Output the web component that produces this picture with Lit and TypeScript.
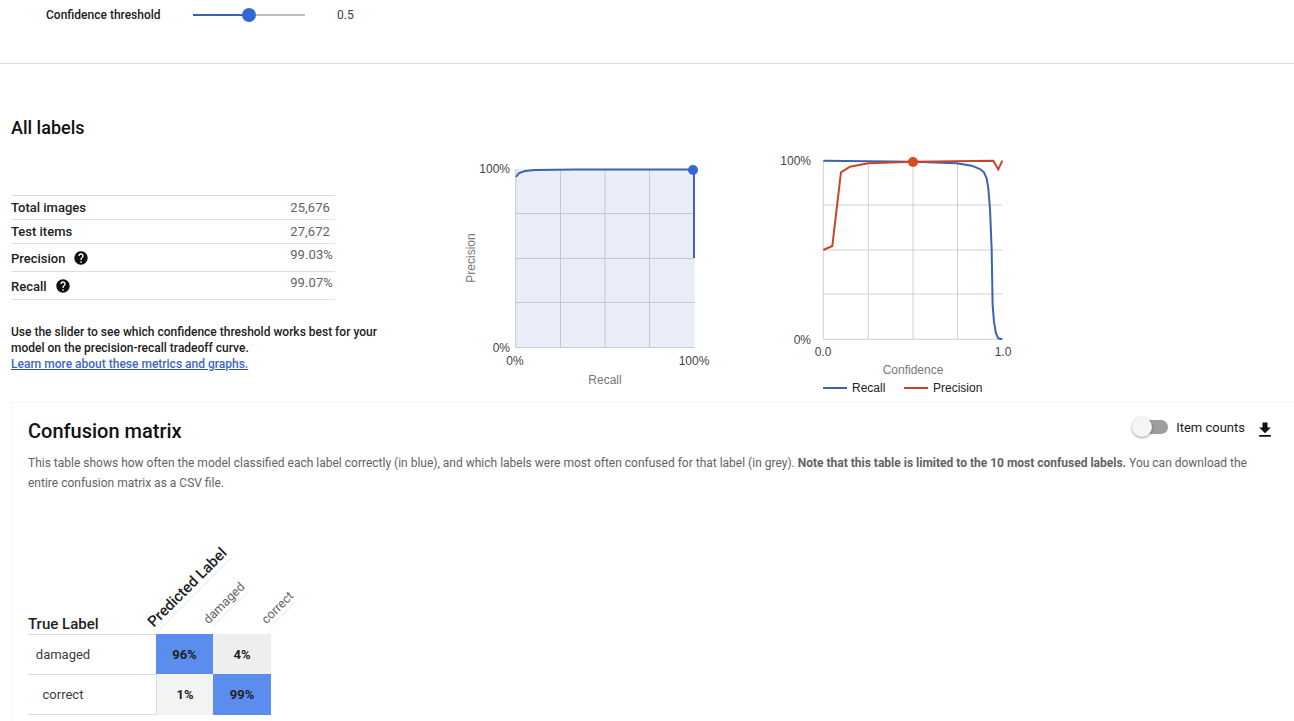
import { LitElement, html, css, svg } from "lit";
import { customElement } from "lit/decorators.js";

const helpPath = "M12 2C6.48 2 2 6.48 2 12s4.48 10 10 10 10-4.48 10-10S17.52 2 12 2zm1 17h-2v-2h2v2zm2.07-7.75l-.9.92C13.45 12.9 13 13.5 13 15h-2v-.5c0-1.1.45-2.1 1.17-2.83l1.24-1.26c.37-.36.59-.86.59-1.41 0-1.1-.9-2-2-2s-2 .9-2 2H8c0-2.21 1.79-4 4-4s4 1.79 4 4c0 .88-.36 1.68-.93 2.25z";

const help = html`<svg class="help" viewBox="0 0 24 24"><path d=${helpPath}></path></svg>`;

const stats = [
  { k: "Total images", v: "25,676", h: false },
  { k: "Test items", v: "27,672", h: false },
  { k: "Precision", v: "99.03%", h: true },
  { k: "Recall", v: "99.07%", h: true },
];

const toPts = (pts: number[][]) => pts.map(([x, y]) => `${x / 3},${y / 3}`).join(" ");

const recall = toPts([[0, 47], [270, 50], [400, 55], [445, 62], [470, 72], [482, 82], [490, 100], [495, 130], [500, 190], [505, 310], [508, 480], [512, 530], [518, 565], [525, 580], [537, 583]]);
const precision = toPts([[0, 315], [27, 303], [53, 82], [80, 65], [135, 55], [270, 50], [510, 47], [525, 73], [537, 47]]);

@customElement("app-root")
export class AppRoot extends LitElement {
  static styles = css`
    :host {
      display: block;
      height: 721px;
      overflow: hidden;
      background: #fff;
      color: #202124;
      font-family: Roboto, "Liberation Sans", sans-serif;
    }
    .top {
      height: 64px;
      box-sizing: border-box;
      border-bottom: 1px solid #dadce0;
      padding-left: 46px;
    }
    .slider-row {
      height: 30px;
      display: flex;
      align-items: center;
      font-size: 12px;
    }
    .slider-label { width: 114px; flex: none; font-weight: 500; white-space: nowrap; }
    .slider {
      margin-left: 33px;
      width: 112px;
      height: 2px;
      background: #bdbdbd;
      position: relative;
    }
    .slider-fill { width: 56px; height: 2px; background: #3a5fb0; }
    .thumb {
      position: absolute;
      left: 49px;
      top: -6px;
      width: 14px;
      height: 14px;
      border-radius: 50%;
      background: #3367d6;
    }
    .slider-value { margin-left: 32px; color: #3c4043; }

    .all {
      padding: 52px 0 0 11px;
      height: 338px;
      box-sizing: border-box;
      display: flex;
    }
    .left { width: 380px; flex: none; }
    h2 {
      margin: 0;
      font-size: 18px;
      line-height: 24px;
      font-weight: 500;
      color: #111;
    }
    .stats {
      margin-top: 55px;
      width: 324px;
      border-top: 1px solid #dadce0;
    }
    .stat {
      display: flex;
      justify-content: space-between;
      border-bottom: 1px solid #e0e0e0;
      height: 23px;
      align-items: center;
      font-size: 13px;
      padding-right: 5px;
    }
    .stat.tall { height: 27px; padding-right: 2px; align-items: flex-start; }
    .stat.tall .k { padding-top: 6px; }
    .stat.tall .v { padding-top: 3px; }
    .k { display: flex; align-items: center; font-weight: 500; }
    .v { color: #5f6368; letter-spacing: 0.1px; }
    .help { width: 16px; height: 16px; margin-left: 8px; fill: #111; }
    .note {
      margin-top: 24px;
      font-size: 12px;
      line-height: 16px;
      font-weight: 500;
      color: #202124;
    }
    .note a {
      color: #3c68c4;
      text-decoration: underline;
      text-decoration-color: #2f4f8f;
      display: block;
    }
    .charts { display: flex; flex: none; }
    .chart { display: block; flex: none; }
    .chart.one { margin: 34px 0 0 64px; }
    .chart.two { margin: 29px 0 0 55px; }
    .chart text { font-family: "Liberation Sans", Arial, sans-serif; font-size: 12px; fill: #444; }
    .chart text.title { fill: #777; }
    .chart text.legend { fill: #222; }
    .grid { stroke: #c6c9d0; stroke-width: 1; fill: none; }
    .grid2 { stroke: #d0d0d0; stroke-width: 1; fill: none; }
    .area { fill: #e9edf9; }

    .card {
      margin-left: 11px;
      border: 1px solid #f5f5f5;
      border-right: none;
      padding: 16px 16px 0 16px;
      height: 340px;
      box-sizing: border-box;
    }
    .card-head { display: flex; align-items: flex-start; height: 24px; }
    h3 {
      margin: 0;
      font-size: 20px;
      line-height: 24px;
      font-weight: 500;
      color: #111;
      flex: 1;
    }
    .tools { display: flex; align-items: center; height: 16px; }
    .toggle {
      position: relative;
      width: 34px;
      height: 14px;
      border-radius: 7px;
      background: #9e9e9e;
    }
    .knob {
      position: absolute;
      left: -2px;
      top: -3px;
      width: 20px;
      height: 20px;
      border-radius: 50%;
      background: #f5f5f5;
      box-shadow: 0 1px 3px rgba(0, 0, 0, 0.4);
    }
    .counts { margin-left: 8px; font-size: 13px; color: #202124; }
    .dl { width: 20px; height: 20px; margin: 6px 3px 0 10px; fill: #111; }
    .desc {
      margin: 10px 0 0;
      font-size: 12px;
      line-height: 20px;
      color: #5f6368;
      max-width: 1240px;
    }
    .desc b { font-weight: 700; }

    .matrix {
      margin-top: 37px;
      display: grid;
      grid-template-columns: 128px 57px 58px;
      grid-template-rows: 104px 40px 41px;
      width: 243px;
    }
    .corner {
      align-self: end;
      padding-right: 58px;
      font-size: 15px;
      font-weight: 500;
      text-align: center;
      color: #202124;
      line-height: 20px;
      white-space: nowrap;
    }
    .colh { position: relative; }
    .rot {
      position: absolute;
      transform-origin: 0 100%;
      transform: rotate(-45deg);
      white-space: nowrap;
      border-bottom: 1px solid #eeeeee;
    }
    .rot.main { left: 2px; bottom: 2px; font-size: 15px; font-weight: 500; color: #202124; line-height: 20px; }
    .rot.sub { font-size: 12.5px; color: #5f6368; line-height: 16px; }
    .rot.a { left: 56px; bottom: 6px; }
    .rot.b { left: 57px; bottom: 6px; }
    .rowh {
      border-top: 1px solid #dadce0;
      padding-right: 58px;
      font-size: 13px;
      color: #3c4043;
      display: flex;
      align-items: center;
      justify-content: center;
    }
    .rowh.last { border-bottom: 1px solid #dadce0; }
    .cell {
      display: flex;
      align-items: center;
      justify-content: center;
      font-size: 13px;
      font-weight: 700;
      color: #202124;
    }
    .cell.hi { background: #5b8def; }
    .cell.mid { background: #eeeeee; }
    .cell.low { background: #f3f3f3; border-left: 1px solid #dadce0; }
  `;

  private chartOne() {
    return html`<svg class="chart one" width="260" height="245" viewBox="0 0 260 245">
      <rect class="area" x="60.7" y="19" width="179" height="178"></rect>
      ${svg`<path class="grid" d="M60.7 19V197.5H239.5M105.5 19V197.5M150 19V197.5M194.5 19V197.5M60.7 63.5H239.5M60.7 108.5H239.5M60.7 152.5H239.5"></path>`}
      <polyline points="61,27 64,23 70,21 80,20 120,19.5 239,19.5 239,108" fill="none" stroke="#3d63ae" stroke-width="2"></polyline>
      <circle cx="238" cy="20" r="5" fill="#3367d6"></circle>
      <text x="55" y="23" text-anchor="end">100%</text>
      <text x="55" y="202" text-anchor="end">0%</text>
      <text x="60" y="215" text-anchor="middle">0%</text>
      <text x="239" y="215" text-anchor="middle">100%</text>
      <text class="title" x="150" y="234" text-anchor="middle">Recall</text>
      <text class="title" transform="translate(20 108) rotate(-90)" text-anchor="middle">Precision</text>
    </svg>`;
  }

  private chartTwo() {
    return html`<svg class="chart two" width="260" height="255" viewBox="0 0 260 255">
      <g transform="translate(53.3 0)">
        ${svg`<path class="grid2" d="M0 15.7V194.3H179M45 15.7V194.3M89.7 15.7V194.3M134.2 15.7V194.3M0 60H179M0 105H179M0 149H179"></path>`}
        <polyline points=${recall} fill="none" stroke="#3d63ae" stroke-width="2"></polyline>
        <polyline points=${precision} fill="none" stroke="#c9442a" stroke-width="2"></polyline>
        <circle cx="89.7" cy="17" r="5" fill="#db4b22"></circle>
      </g>
      <text x="41" y="20" text-anchor="end">100%</text>
      <text x="41" y="199" text-anchor="end">0%</text>
      <text x="53" y="211" text-anchor="middle">0.0</text>
      <text x="233" y="211" text-anchor="middle">1.0</text>
      <text class="title" x="143" y="229" text-anchor="middle">Confidence</text>
      <rect x="53" y="242" width="24" height="2" fill="#3d63ae"></rect>
      <text class="legend" x="82" y="247">Recall</text>
      <rect x="134" y="242" width="24" height="2" fill="#c9442a"></rect>
      <text class="legend" x="163" y="247">Precision</text>
    </svg>`;
  }

  render() {
    return html`
      <div class="top">
        <div class="slider-row">
          <span class="slider-label">Confidence threshold</span>
          <div class="slider"><div class="slider-fill"></div><div class="thumb"></div></div>
          <span class="slider-value">0.5</span>
        </div>
      </div>

      <section class="all">
        <div class="left">
          <h2>All labels</h2>
          <div class="stats">
            ${stats.map(
              (s) => html`<div class="stat ${s.h ? "tall" : ""}">
                <span class="k">${s.k}${s.h ? help : ""}</span>
                <span class="v">${s.v}</span>
              </div>`
            )}
          </div>
          <div class="note">
            Use the slider to see which confidence threshold works best for your
            model on the precision-recall tradeoff curve.
            <a>Learn more about these metrics and graphs.</a>
          </div>
        </div>
        <div class="charts">${this.chartOne()}${this.chartTwo()}</div>
      </section>

      <section class="card">
        <div class="card-head">
          <h3>Confusion matrix</h3>
          <div class="tools">
            <div class="toggle"><div class="knob"></div></div>
            <span class="counts">Item counts</span>
            <svg class="dl" viewBox="0 0 24 24"><path d="M19 9h-4V3H9v6H5l7 7 7-7zM5 18v2h14v-2H5z"></path></svg>
          </div>
        </div>
        <p class="desc">
          This table shows how often the model classified each label correctly (in blue), and which labels were most often confused for that label (in grey).
          <b>Note that this table is limited to the 10 most confused labels.</b>
          You can download the entire confusion matrix as a CSV file.
        </p>
        <div class="matrix">
          <div class="corner">True Label</div>
          <div class="colh"><span class="rot main">Predicted Label</span><span class="rot sub a">damaged</span></div>
          <div class="colh"><span class="rot sub b">correct</span></div>
          <div class="rowh">damaged</div>
          <div class="cell hi">96%</div>
          <div class="cell mid">4%</div>
          <div class="rowh last">correct</div>
          <div class="cell low">1%</div>
          <div class="cell hi">99%</div>
        </div>
      </section>
    `;
  }
}
